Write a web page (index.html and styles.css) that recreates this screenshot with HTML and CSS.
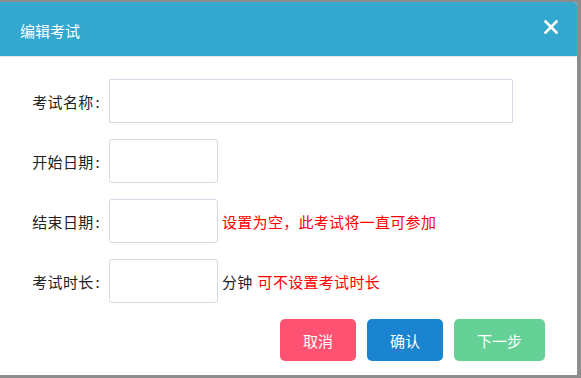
FILE: index.html
```html
<!DOCTYPE html>
<html lang="zh-CN">

<head>
  <meta charset="UTF-8">
  <meta name="viewport" content="width=device-width, initial-scale=1.0">
  <title>编辑考试</title>
  <link rel="stylesheet" href="styles.css">
</head>

<body>
  <div class="modal">
    <div class="modal-header">
      <h4 class="modal-title">编辑考试</h4>
      <span class="modal-close">
        <svg width="14" height="14" viewBox="0 0 14 14">
          <path d="M1.5 1.5 L12.5 12.5 M12.5 1.5 L1.5 12.5" stroke="#fff" stroke-width="2.6" stroke-linecap="square" fill="none" />
        </svg>
      </span>
    </div>

    <div class="modal-body">
      <div class="form-row">
        <label class="form-label">考试名称<span class="colon">:</span></label>
        <input class="form-input wide" type="text">
      </div>
      <div class="form-row">
        <label class="form-label">开始日期<span class="colon">:</span></label>
        <input class="form-input" type="text">
      </div>
      <div class="form-row">
        <label class="form-label">结束日期<span class="colon">:</span></label>
        <input class="form-input" type="text">
        <span class="form-tip">设置为空，此考试将一直可参加</span>
      </div>
      <div class="form-row">
        <label class="form-label">考试时长<span class="colon">:</span></label>
        <input class="form-input" type="text">
        <span class="form-unit">分钟</span>
        <span class="form-tip">可不设置考试时长</span>
      </div>

      <div class="modal-footer">
        <button class="btn btn-cancel">取消</button>
        <button class="btn btn-ok">确认</button>
        <button class="btn btn-next">下一步</button>
      </div>
    </div>
  </div>
</body>

</html>
```

FILE: styles.css
```css
* {
  margin: 0;
  padding: 0;
  box-sizing: border-box;
}

body {
  font-family: "Noto Sans CJK SC", "Microsoft YaHei", sans-serif;
  background-color: #8d8d8d;
  color: #222;
  font-size: 15px;
  letter-spacing: 0.3px;
  height: 378px;
  overflow: hidden;
}

.modal {
  width: 577px;
  height: 373px;
  margin-top: 2px;
  background-color: #fff;
  border-top-right-radius: 4px;
  overflow: hidden;
}

.modal-header {
  height: 55px;
  background-color: #35a8d0;
  border-bottom: 1px solid #e6e6e6;
  display: flex;
  align-items: center;
  justify-content: space-between;
  padding: 0 19px 0 20px;
}

.modal-title {
  color: #fff;
  font-size: 15px;
  font-weight: 400;
  letter-spacing: 0;
  margin-top: 2px;
}

.modal-close {
  display: flex;
  margin-top: -4px;
}

.modal-body {
  padding-top: 22px;
}

.form-row {
  display: flex;
  align-items: center;
  height: 44px;
  margin-bottom: 16px;
}

.form-label {
  width: 109px;
  padding-right: 9px;
  text-align: right;
}

.colon {
  margin-left: 2px;
}

.form-input {
  width: 109px;
  height: 44px;
  border: 1px solid #d7dae6;
  border-radius: 3px;
  outline: none;
  background-color: #fff;
}

.form-input.wide {
  width: 404px;
  border-radius: 1px;
}

.form-unit {
  margin-left: 4px;
  margin-right: 5px;
}

.form-tip {
  color: #ff0000;
}

.form-input + .form-tip {
  margin-left: 4px;
}

.modal-footer {
  display: flex;
  justify-content: flex-end;
  gap: 11px;
  padding-right: 32px;
}

.btn {
  height: 42px;
  width: 76px;
  border: none;
  border-radius: 5px;
  color: #fff;
  font-family: inherit;
  font-size: 15px;
}

.btn-cancel {
  background-color: #fe5273;
}

.btn-ok {
  background-color: #1a84d0;
}

.btn-next {
  width: 91px;
  background-color: #66d197;
}
```
